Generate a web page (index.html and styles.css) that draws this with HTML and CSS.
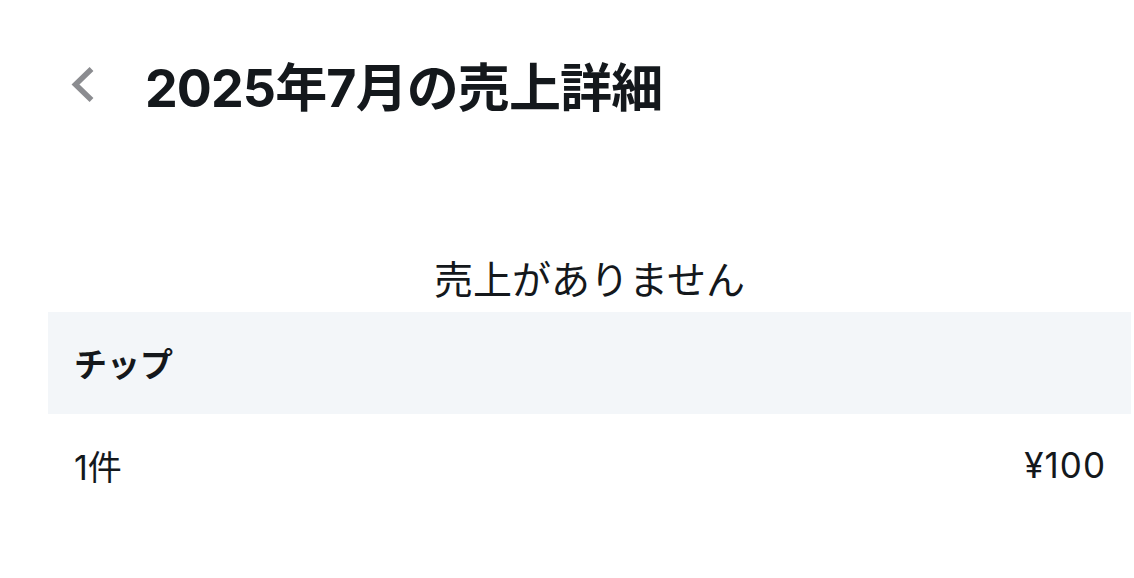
FILE: index.html
```html
<!DOCTYPE html>
<html lang="ja">
<head>
<meta charset="utf-8">
<link rel="stylesheet" href="styles.css">
</head>
<body>
<div class="page">
  <header class="header">
    <span class="back" aria-label="戻る">
      <svg width="24" height="36" viewBox="0 0 24 36"><path d="M20.5 2 L4.5 17.5 L20.5 33" fill="none" stroke="#8b8c90" stroke-width="5.5" stroke-linecap="butt" stroke-linejoin="miter"/></svg>
    </span>
    <h1 class="title">2025年7月の売上詳細</h1>
  </header>
  <p class="empty">売上がありません</p>
  <div class="section-head">チップ</div>
  <div class="row">
    <span class="count">1件</span>
    <span class="amount">¥100</span>
  </div>
</div>
</body>
</html>
```
FILE: styles.css
```css
* { box-sizing: border-box; }
html, body { margin: 0; padding: 0; background: #ffffff; }
body {
  font-family: "Inter", "Noto Sans CJK JP", sans-serif;
  color: #14181c;
}
.page {
  padding-left: 48px;
  padding-right: 3px;
}
.header {
  display: flex;
  align-items: center;
  height: 78px;
  margin-top: 50px;
}
.back {
  display: flex;
  margin-left: 23px;
  margin-bottom: 8px;
  width: 24px;
}
.title {
  margin: 0 0 0 50px;
  font-size: 52px;
  font-weight: 700;
  line-height: 78px;
  letter-spacing: -0.9px;
}
.empty {
  margin: 126px 0 6px;
  text-align: center;
  font-size: 39px;
  line-height: 52px;
  font-weight: 400;
}
.section-head {
  display: flex;
  align-items: center;
  height: 102px;
  background: #f3f6f9;
  padding-left: 26px;
  font-size: 33px;
  font-weight: 700;
}
.row {
  display: flex;
  justify-content: space-between;
  align-items: center;
  height: 102px;
  padding: 0 26px;
  font-size: 34px;
}
.amount {
  font-size: 35px;
  letter-spacing: 1px;
  margin-right: -1px;
}
```
